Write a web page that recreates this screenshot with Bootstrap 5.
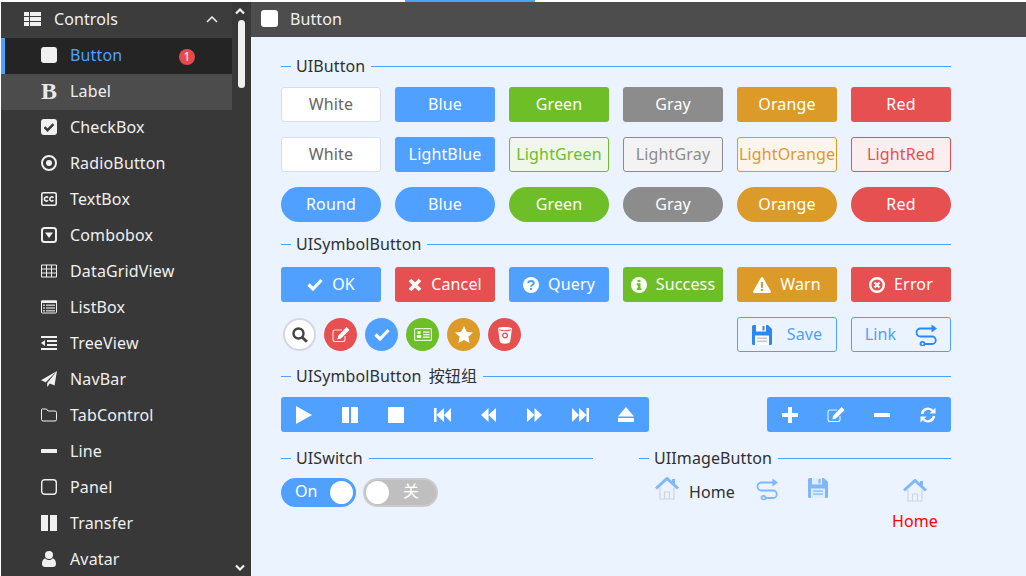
<!DOCTYPE html>
<html lang="en">
<head>
  <title>Controls</title>
  <meta charset="utf-8">
  <meta name="viewport" content="width=device-width, initial-scale=1">
  <link href="https://cdn.jsdelivr.net/npm/bootstrap@5.3.3/dist/css/bootstrap.min.css" rel="stylesheet">
  <script src="https://cdn.jsdelivr.net/npm/bootstrap@5.3.3/dist/js/bootstrap.bundle.min.js"></script>
  <style>
      html, body { height: 100%; overflow: hidden; }
      body {
          background: #fff;
          font-family: "Noto Sans", "Noto Sans CJK SC", sans-serif;
          font-size: 16px;
          letter-spacing: .1px;
      }
      svg { display: block; flex: none; }
      .topstrip { height: 2px; }
      .topstrip i { display: block; width: 130px; height: 2px; margin-left: 405px; background: #50a0ff; }
      .shell { height: 574px; padding-left: 1px; }

      /* side menu */
      .sidemenu { width: 250px; background: #383838; position: relative; overflow: hidden; flex: none; }
      .menu-head { height: 36px; width: 231px; color: #f0f0f0; background: #3c3c3c; padding: 0 0 2px 23px; }
      .menu-head span { margin-left: 13px; }
      .menu-head svg:last-child { margin-left: auto; margin-right: 14px; }
      .menu-list { width: 231px; border-radius: 0; }
      .menu-list .list-group-item {
          height: 36px; padding: 0 0 3px 40px; background: transparent; color: #f0f0f0;
          border: 0; display: flex; align-items: center; position: relative; letter-spacing: .15px;
      }
      .menu-list .list-group-item > span.lbl { margin-left: 13px; }
      .menu-list .is-on { background: #242424; color: #50a0ff; border-left: 4px solid #50a0ff; padding-left: 36px; }
      .menu-list .is-over { background: #4c4c4c; }
      .mi { width: 16px; height: 16px; color: #f0f0f0; }
      .serif-b {
          width: 16px; text-align: center; font: 700 24px/24px "Liberation Serif", serif; color: #e8e8e8;
      }
      .menu-badge {
          position: absolute; left: 174px; top: 11px; width: 16px; height: 16px; border-radius: 50%;
          background: #e64a4a; color: #fff; font-size: 12px; font-weight: 400; line-height: 16px; text-align: center; padding: 0;
      }
      .scroll-up, .scroll-down { position: absolute; left: 234px; color: #f0f0f0; }
      .scroll-up { top: 6px; }
      .scroll-down { top: 562px; }
      .scroll-thumb { position: absolute; left: 237px; top: 18px; width: 7px; height: 68px; background: #f0f0f0; border-radius: 4px; }

      /* right side */
      .pagehead { height: 35px; background: #4d4d4d; color: #f0f0f0; padding: 0 0 2px 10px; gap: 12px; flex: none; }
      .pagehead svg { width: 17px; height: 17px; color: #fff; }
      .pagebody { background: #eaf3ff; flex: 1; padding: 19px 0 0 30px; }
      .inner { width: 670px; }
      .uititle { height: 20px; color: #303030; line-height: 20px; }
      .uititle::before { content: ""; width: 10px; border-top: 1px solid #50a0ff; margin-right: 5px; }
      .uititle::after { content: ""; flex: 1; border-top: 1px solid #50a0ff; margin-left: 6px; }
      .uititle.zh { word-spacing: 3px; }
      .gap-a { margin: 0 0 11px; }
      .gap-b { margin: 12px 0 13px; }
      .gap-c { margin: 14px 0 11px; }
      .gap-d { margin: 16px 0 10px; }
      .btnrow { display: flex; gap: 14px; margin-bottom: 15px; }
      .ui {
          width: 100px; height: 35px; padding: 0 0 2px; border-radius: 3px; border: 1px solid transparent;
          color: #fff; font-size: 16px; line-height: 1; display: flex; align-items: center; justify-content: center; gap: 9px;
          white-space: nowrap; letter-spacing: .15px;
      }
      .ui svg { margin-top: 2px; }
      .ui:hover { color: #fff; }
      .c-white { background: #fff; border-color: #d8dfea; color: #666; }
      .c-blue { background: #50a0ff; }
      .c-green { background: #6ebe28; }
      .c-gray { background: #8c8c8c; }
      .c-orange { background: #dc9b28; }
      .c-red { background: #e65050; }
      .l-green { background: #eff7ea; border-color: #6ebe28; color: #6ebe28; }
      .l-gray { background: #f3f3f3; border-color: #8c8c8c; color: #8c8c8c; }
      .l-orange { background: #fcf5eb; border-color: #dc9b28; color: #dc9b28; }
      .l-red { background: #fceeee; border-color: #e65050; color: #e65050; }
      .pill { border-radius: 18px; }
      .line-btn { background: transparent; border-color: #50a0ff; color: #50a0ff; gap: 15px; }
      .line-btn.is-link { gap: 19px; }
      .line-btn svg { color: #2a88ee; }
      .circles { display: flex; gap: 8px; margin-left: 2px; align-items: center; }
      .circ { width: 33px; height: 33px; border-radius: 50%; color: #fff; display: flex; align-items: center; justify-content: center; }
      .circ.c-white { border: 2px solid #d4d8e2; color: #444; }
      .playbar { height: 35px; background: #50a0ff; border-radius: 3px; color: #fff; display: flex; }
      .playbar span { width: 46px; display: flex; align-items: center; justify-content: center; }
      .half { width: 312px; }
      .toggle {
          width: 75px; height: 29px; border-radius: 15px; color: #fff; display: flex; align-items: center;
          border: 2px solid #50a0ff; background: #50a0ff; padding: 0 1px 0 12px; justify-content: space-between;
      }
      .toggle span { margin-top: -3px; }
      .toggle b { width: 23px; height: 23px; border-radius: 50%; background: #fff; display: block; }
      .toggle.is-off { background: #bfbfbf; border-color: #cbcbcb; padding: 0 17px 0 1px; margin-left: 7px; }
      .toggle.is-off span { font-size: 16px; }
      .imgs { padding-left: 16px; margin-top: -1px; }
      .imgs .txt { margin: 3px 0 0 10px; color: #303030; line-height: 24px; }
      .img-link { margin-left: 21px; margin-top: 1px; color: #7eb8f9; }
      .img-save { margin-left: 30px; margin-top: 1px; }
      .img-home { margin-left: 64px; width: 46px; margin-top: 2px; color: #f00; line-height: 22px; }
      .img-home svg { margin-bottom: 8px; }
  </style>
</head>
<body>
<svg width="0" height="0" class="position-absolute">
  <defs>
    <symbol id="i-thlist" viewBox="0 0 17 14"><path fill="currentColor" d="M0 0h5v4H0zM6 0h11v4H6zM0 5h5v4H0zM6 5h11v4H6zM0 10h5v4H0zM6 10h11v4H6z"/></symbol>
    <symbol id="i-sq" viewBox="0 0 16 16"><rect width="16" height="16" rx="3" fill="currentColor"/></symbol>
    <symbol id="i-chk" viewBox="0 0 16 16"><rect width="16" height="16" rx="3" fill="currentColor"/><path d="M3.500 8.200l3 3 6-6" fill="none" stroke="#383838" stroke-width="2.400"/></symbol>
    <symbol id="i-dot" viewBox="0 0 16 16"><circle cx="8" cy="8" r="7" fill="none" stroke="currentColor" stroke-width="2"/><circle cx="8" cy="8" r="3" fill="currentColor"/></symbol>
    <symbol id="i-cc" viewBox="0 0 16 14"><rect x=".8" y=".8" width="14.400" height="12.400" rx="1.500" fill="none" stroke="currentColor" stroke-width="1.600"/><path d="M7 5.700C6.200 4.600 3.400 4.600 3.400 7s2.800 2.400 3.600 1.300M12.400 5.700c-.8-1.100-3.600-1.100-3.600 1.300s2.800 2.400 3.600 1.300" fill="none" stroke="currentColor" stroke-width="1.700"/></symbol>
    <symbol id="i-caret" viewBox="0 0 16 16"><rect x="1" y="1" width="14" height="14" rx="2.500" fill="none" stroke="currentColor" stroke-width="2"/><path d="M4 5.500h8L8 11z" fill="currentColor"/></symbol>
    <symbol id="i-table" viewBox="0 0 16 13"><path fill="none" stroke="currentColor" d="M.5.500h15v12H.500zM.5 4.500h15M.5 8.500h15M5.500 .5v12M10.500 .5v12"/></symbol>
    <symbol id="i-listalt" viewBox="0 0 16 13"><rect x=".5" y=".5" width="15" height="12" rx="1" fill="none" stroke="currentColor"/><path fill="currentColor" d="M0 0h16v2.500H0z"/><path fill="currentColor" opacity=".75" d="M2 4h2v1.500H2zM5 4h9v1.500H5zM2 6.700h2v1.500H2zM5 6.700h9v1.500H5zM2 9.400h2v1.500H2zM5 9.400h9v1.500H5z"/></symbol>
    <symbol id="i-outdent" viewBox="0 0 16 14"><path fill="currentColor" d="M0 0h16v2H0zM6 4h10v2H6zM6 8h10v2H6zM0 12h16v2H0zM4 4v6L0 7z"/></symbol>
    <symbol id="i-plane" viewBox="0 0 16 16"><path fill="currentColor" d="M16 0l-2.500 14.500-4.600-2L6.200 16V12zM16 0L0 9.300l4.700 2z"/></symbol>
    <symbol id="i-folder" viewBox="0 0 16 13"><path fill="none" stroke="currentColor" d="M1 .5h4.500l1.500 2h7a1.500 1.500 0 0 1 1.500 1.500v7a1.500 1.500 0 0 1-1.500 1.500H2A1.500 1.500 0 0 1 .5 11V1z"/></symbol>
    <symbol id="i-minus" viewBox="0 0 16 4"><rect width="16" height="4" rx=".5" fill="currentColor"/></symbol>
    <symbol id="i-sqo" viewBox="0 0 16 16"><rect x=".7" y=".7" width="14.600" height="14.600" rx="3" fill="none" stroke="currentColor" stroke-width="1.400"/></symbol>
    <symbol id="i-pause" viewBox="0 0 16 16"><path fill="currentColor" d="M0 0h7v16H0zM9 0h7v16H9z"/></symbol>
    <symbol id="i-user" viewBox="0 0 14 16"><circle cx="7" cy="4" r="4" fill="currentColor"/><path fill="currentColor" d="M0 13c0-4 2-5.500 3.500-5.500C4.500 8.500 5.700 9 7 9s2.500-.5 3.500-1.500C12 7.500 14 9 14 13c0 2-1.300 3-3 3H3c-1.700 0-3-1-3-3z"/></symbol>
    <symbol id="i-up" viewBox="0 0 12 7"><path d="M1 6l5-5 5 5" fill="none" stroke="currentColor" stroke-width="1.500"/></symbol>
    <symbol id="i-chev" viewBox="0 0 10 7"><path d="M1 5.500l4-4 4 4" fill="none" stroke="currentColor" stroke-width="2.200"/></symbol>
    <symbol id="i-chevd" viewBox="0 0 10 7"><path d="M1 1.500l4 4 4-4" fill="none" stroke="currentColor" stroke-width="2.200"/></symbol>
    <symbol id="i-check" viewBox="0 0 16 13"><path d="M1.500 6.500l4.500 4.500L14.500 2" fill="none" stroke="currentColor" stroke-width="3.200"/></symbol>
    <symbol id="i-x" viewBox="0 0 14 14"><path d="M2 2l10 10M12 2L2 12" fill="none" stroke="currentColor" stroke-width="3.800"/></symbol>
    <symbol id="i-query" viewBox="0 0 16 16"><circle cx="8" cy="8" r="8" fill="currentColor"/><path d="M5.200 6.200C5.400 3.300 10.800 3.400 10.800 6.200 10.800 8 8 8 8 9.800" fill="none" stroke="#50a0ff" stroke-width="2"/><rect x="7" y="11" width="2" height="2" fill="#50a0ff"/></symbol>
    <symbol id="i-info" viewBox="0 0 16 16"><circle cx="8" cy="8" r="8" fill="currentColor"/><path fill="#6ebe28" d="M6.500 2.800h3v2.200h-3zM5.700 6.300h3.800v5h1v1.800H5.700v-1.800h1v-3.200h-1z"/></symbol>
    <symbol id="i-warn" viewBox="0 0 18 16"><path fill="currentColor" d="M9 0c.5 0 .9.300 1.100.7l7.700 13.500c.4.800-.1 1.800-1.100 1.800H1.300c-1 0-1.500-1-1.100-1.800L7.900.7C8.100.3 8.500 0 9 0z"/><path fill="#dc9b28" d="M7.800 5h2.400l-.3 6H8.100zM7.900 12h2.200v2H7.900z"/></symbol>
    <symbol id="i-err" viewBox="0 0 16 16"><circle cx="8" cy="8" r="6.800" fill="none" stroke="currentColor" stroke-width="2.400"/><path d="M5.500 5.500l5 5M10.500 5.500l-5 5" stroke="currentColor" stroke-width="2.200"/></symbol>
    <symbol id="i-search" viewBox="0 0 16 16"><circle cx="6.500" cy="6.500" r="5" fill="none" stroke="currentColor" stroke-width="2.400"/><path d="M10.200 10.200l4.600 4.600" stroke="currentColor" stroke-width="2.800"/></symbol>
    <symbol id="i-edit" viewBox="0 0 18 16"><path d="M13 9v3.500a2 2 0 0 1-2 2H3a2 2 0 0 1-2-2V5a2 2 0 0 1 2-2h7" fill="none" stroke="currentColor" stroke-width="1.100" opacity=".85"/><path fill="currentColor" d="M14.500 0L17.500 3 9 11.500 5.500 12.500 6 9z"/></symbol>
    <symbol id="i-card" viewBox="0 0 18 13"><rect x=".6" y=".6" width="16.800" height="11.800" rx="1" fill="none" stroke="currentColor" stroke-width="1.200" opacity=".8"/><path fill="currentColor" d="M3.500 3h3v3h-3zM2.800 7h4.400v3H2.800zM9 3.500h6.500v1.200H9zM9 6h6.500v1.200H9zM9 8.500h6.500v1.200H9z"/></symbol>
    <symbol id="i-star" viewBox="0 0 18 17"><path fill="currentColor" d="M9 0l2.700 5.700 6.300.8-4.600 4.300 1.200 6.200L9 14l-5.600 3 1.200-6.200L0 6.500l6.300-.8z"/></symbol>
    <symbol id="i-bucket" viewBox="0 0 16 18"><path fill="currentColor" d="M1 2.500C1 .5 15 .5 15 2.500l-1.800 13c-.2 3-10.200 3-10.400 0z"/><path d="M2.200 3.800c3 1 8.600 1 11.600 0" fill="none" stroke="#e65050" stroke-width="1.200"/><circle cx="8" cy="9.500" r="2.300" fill="none" stroke="#e65050" stroke-width="1.300"/></symbol>
    <symbol id="i-play" viewBox="0 0 16 18"><path fill="currentColor" d="M0 0l16 9L0 18z"/></symbol>
    <symbol id="i-stop" viewBox="0 0 16 16"><rect width="16" height="16" fill="currentColor"/></symbol>
    <symbol id="i-stepb" viewBox="0 0 17 14"><path fill="currentColor" d="M0 0h2.500v14H0zM2.500 7L10 0v14zM10 7l7-7v14z"/></symbol>
    <symbol id="i-back" viewBox="0 0 15 14"><path fill="currentColor" d="M0 7l7.500-7v14zM7.500 7L15 0v14z"/></symbol>
    <symbol id="i-fwd" viewBox="0 0 15 14"><path fill="currentColor" d="M15 7L7.500 0v14zM7.500 7L0 0v14z"/></symbol>
    <symbol id="i-stepf" viewBox="0 0 17 14"><path fill="currentColor" d="M17 0h-2.500v14H17zM14.500 7L7 0v14zM7 7L0 0v14z"/></symbol>
    <symbol id="i-eject" viewBox="0 0 16 15"><path fill="currentColor" d="M8 0l8 9.500H0zM0 11h16v4H0z"/></symbol>
    <symbol id="i-plus" viewBox="0 0 16 16"><path fill="currentColor" d="M6 0h4v6h6v4h-6v6H6v-6H0V6h6z"/></symbol>
    <symbol id="i-sync" viewBox="0 0 16 16"><path d="M2 7a6 6 0 0 1 10.500-3.200M14 9a6 6 0 0 1-10.500 3.200" fill="none" stroke="currentColor" stroke-width="2.400"/><path fill="currentColor" d="M15.500 0.500v6h-6zM.5 15.500v-6h6z"/></symbol>
    <symbol id="i-route" viewBox="0 0 22 22"><g fill="none" stroke="currentColor" stroke-width="1.800"><path d="M18 4.500H5.500a4 4 0 0 0 0 8H17a3.700 3.700 0 0 1 0 7.500H10"/><circle cx="7.500" cy="19.800" r="2"/></g><path fill="currentColor" d="M16.500 .5L22 4.500l-5.500 4z"/></symbol>
    <symbol id="i-floppy" viewBox="0 0 20 20"><path fill="currentColor" d="M1.500 0H16l4 4v14.500a1.500 1.500 0 0 1-1.500 1.500h-17A1.500 1.500 0 0 1 0 18.500V1.500A1.500 1.500 0 0 1 1.500 0z"/><path fill="#fff" d="M4 0h10v6.500H4zM3 10.500h14V20H3z"/><path fill="currentColor" d="M10.500 1h2v4.500h-2z"/><path fill="#c4c9d0" d="M5 12.500h10V14H5zM5 15.500h10V17H5z"/></symbol>
    <symbol id="i-floppy2" viewBox="0 0 20 20"><path fill="#7eb8f9" d="M1.500 0H16l4 4v14.500a1.500 1.500 0 0 1-1.500 1.500h-17A1.500 1.500 0 0 1 0 18.500V1.500A1.500 1.500 0 0 1 1.500 0z"/><path fill="#dfecfb" d="M4 0h10v6.500H4zM3 10.500h14V20H3z"/><path fill="#7eb8f9" d="M10.500 1h2v4.500h-2zM5 12.500h10v1.200H5zM5 15.500h10v1.200H5z"/></symbol>
    <symbol id="i-home" viewBox="0 0 24 23"><path d="M5 10.500V22h14V10.500M9.500 22v-7h5v7" fill="none" stroke="#d0d5de" stroke-width="1.200"/><path d="M1 11.500L12 1.500l11 10" fill="none" stroke="#7eb8f9" stroke-width="3"/><path fill="#7eb8f9" d="M17 2h3v6h-3z"/></symbol>
  </defs>
</svg>
<div class="topstrip"><i></i></div>
<div class="shell d-flex">
  <div class="sidemenu">
    <div class="menu-head d-flex align-items-center">
      <svg width="17" height="14"><use href="#i-thlist"/></svg>
      <span>Controls</span>
      <svg width="12" height="7"><use href="#i-up"/></svg>
    </div>
    <div class="list-group menu-list">
      <a class="list-group-item is-on" href="#"><svg class="mi"><use href="#i-sq"/></svg><span class="lbl">Button</span><span class="badge menu-badge">1</span></a>
      <a class="list-group-item is-over" href="#"><span class="serif-b">B</span><span class="lbl">Label</span></a>
      <a class="list-group-item" href="#"><svg class="mi"><use href="#i-chk"/></svg><span class="lbl">CheckBox</span></a>
      <a class="list-group-item" href="#"><svg class="mi"><use href="#i-dot"/></svg><span class="lbl">RadioButton</span></a>
      <a class="list-group-item" href="#"><svg class="mi"><use href="#i-cc"/></svg><span class="lbl">TextBox</span></a>
      <a class="list-group-item" href="#"><svg class="mi"><use href="#i-caret"/></svg><span class="lbl">Combobox</span></a>
      <a class="list-group-item" href="#"><svg class="mi"><use href="#i-table"/></svg><span class="lbl">DataGridView</span></a>
      <a class="list-group-item" href="#"><svg class="mi"><use href="#i-listalt"/></svg><span class="lbl">ListBox</span></a>
      <a class="list-group-item" href="#"><svg class="mi"><use href="#i-outdent"/></svg><span class="lbl">TreeView</span></a>
      <a class="list-group-item" href="#"><svg class="mi"><use href="#i-plane"/></svg><span class="lbl">NavBar</span></a>
      <a class="list-group-item" href="#"><svg class="mi"><use href="#i-folder"/></svg><span class="lbl">TabControl</span></a>
      <a class="list-group-item" href="#"><svg class="mi"><use href="#i-minus"/></svg><span class="lbl">Line</span></a>
      <a class="list-group-item" href="#"><svg class="mi"><use href="#i-sqo"/></svg><span class="lbl">Panel</span></a>
      <a class="list-group-item" href="#"><svg class="mi"><use href="#i-pause"/></svg><span class="lbl">Transfer</span></a>
      <a class="list-group-item" href="#"><svg class="mi"><use href="#i-user"/></svg><span class="lbl">Avatar</span></a>
    </div>
    <svg class="scroll-up" width="10" height="7"><use href="#i-chev"/></svg>
    <div class="scroll-thumb"></div>
    <svg class="scroll-down" width="10" height="7"><use href="#i-chevd"/></svg>
  </div>
  <div class="flex-grow-1 d-flex flex-column">
    <div class="pagehead d-flex align-items-center">
      <svg><use href="#i-sq"/></svg>
      <span>Button</span>
    </div>
    <div class="pagebody">
      <div class="inner">
        <div class="uititle d-flex align-items-center gap-a">UIButton</div>
        <div class="btnrow">
          <a class="btn ui c-white" href="#">White</a><a class="btn ui c-blue" href="#">Blue</a><a class="btn ui c-green" href="#">Green</a><a class="btn ui c-gray" href="#">Gray</a><a class="btn ui c-orange" href="#">Orange</a><a class="btn ui c-red" href="#">Red</a>
        </div>
        <div class="btnrow">
          <a class="btn ui c-white" href="#">White</a><a class="btn ui c-blue" href="#">LightBlue</a><a class="btn ui l-green" href="#">LightGreen</a><a class="btn ui l-gray" href="#">LightGray</a><a class="btn ui l-orange" href="#">LightOrange</a><a class="btn ui l-red" href="#">LightRed</a>
        </div>
        <div class="btnrow mb-0">
          <a class="btn ui pill c-blue" href="#">Round</a><a class="btn ui pill c-blue" href="#">Blue</a><a class="btn ui pill c-green" href="#">Green</a><a class="btn ui pill c-gray" href="#">Gray</a><a class="btn ui pill c-orange" href="#">Orange</a><a class="btn ui pill c-red" href="#">Red</a>
        </div>

        <div class="uititle d-flex align-items-center gap-b">UISymbolButton</div>
        <div class="btnrow">
          <a class="btn ui c-blue" href="#"><svg width="16" height="13"><use href="#i-check"/></svg>OK</a>
          <a class="btn ui c-red" href="#"><svg width="14" height="14"><use href="#i-x"/></svg>Cancel</a>
          <a class="btn ui c-blue" href="#"><svg width="16" height="16"><use href="#i-query"/></svg>Query</a>
          <a class="btn ui c-green" href="#"><svg width="16" height="16"><use href="#i-info"/></svg>Success</a>
          <a class="btn ui c-orange" href="#"><svg width="18" height="16"><use href="#i-warn"/></svg>Warn</a>
          <a class="btn ui c-red" href="#"><svg width="16" height="16"><use href="#i-err"/></svg>Error</a>
        </div>
        <div class="d-flex justify-content-between align-items-center">
          <div class="circles">
            <a class="circ c-white" href="#"><svg width="16" height="16"><use href="#i-search"/></svg></a>
            <a class="circ c-red" href="#"><svg width="18" height="16"><use href="#i-edit"/></svg></a>
            <a class="circ c-blue" href="#"><svg width="16" height="13"><use href="#i-check"/></svg></a>
            <a class="circ c-green" href="#"><svg width="18" height="13"><use href="#i-card"/></svg></a>
            <a class="circ c-orange" href="#"><svg width="18" height="17"><use href="#i-star"/></svg></a>
            <a class="circ c-red" href="#"><svg width="16" height="18"><use href="#i-bucket"/></svg></a>
          </div>
          <div class="btnrow mb-0">
            <a class="btn ui line-btn" href="#"><svg width="20" height="20"><use href="#i-floppy"/></svg>Save</a>
            <a class="btn ui line-btn is-link" href="#">Link<svg width="22" height="22"><use href="#i-route"/></svg></a>
          </div>
        </div>

        <div class="uititle zh d-flex align-items-center gap-c">UISymbolButton 按钮组</div>
        <div class="d-flex justify-content-between">
          <div class="playbar">
            <span><svg width="16" height="18"><use href="#i-play"/></svg></span>
            <span><svg width="16" height="16"><use href="#i-pause"/></svg></span>
            <span><svg width="16" height="16"><use href="#i-stop"/></svg></span>
            <span><svg width="17" height="14"><use href="#i-stepb"/></svg></span>
            <span><svg width="15" height="14"><use href="#i-back"/></svg></span>
            <span><svg width="15" height="14"><use href="#i-fwd"/></svg></span>
            <span><svg width="17" height="14"><use href="#i-stepf"/></svg></span>
            <span><svg width="16" height="15"><use href="#i-eject"/></svg></span>
          </div>
          <div class="playbar">
            <span><svg width="16" height="16"><use href="#i-plus"/></svg></span>
            <span><svg width="18" height="16"><use href="#i-edit"/></svg></span>
            <span><svg width="16" height="4"><use href="#i-minus"/></svg></span>
            <span><svg width="16" height="16"><use href="#i-sync"/></svg></span>
          </div>
        </div>

        <div class="d-flex justify-content-between">
          <div class="half">
            <div class="uititle d-flex align-items-center gap-d">UISwitch</div>
            <div class="d-flex">
              <div class="toggle"><span>On</span><b></b></div>
              <div class="toggle is-off"><b></b><span>关</span></div>
            </div>
          </div>
          <div class="half">
            <div class="uititle d-flex align-items-center gap-d">UIImageButton</div>
            <div class="imgs d-flex align-items-start">
              <svg width="24" height="23"><use href="#i-home"/></svg>
              <span class="txt">Home</span>
              <svg class="img-link" width="22" height="22"><use href="#i-route"/></svg>
              <svg class="img-save" width="20" height="20"><use href="#i-floppy2"/></svg>
              <div class="img-home d-flex flex-column align-items-center">
                <svg width="24" height="23"><use href="#i-home"/></svg>
                <span>Home</span>
              </div>
            </div>
          </div>
        </div>
      </div>
    </div>
  </div>
</div>
</body>
</html>
